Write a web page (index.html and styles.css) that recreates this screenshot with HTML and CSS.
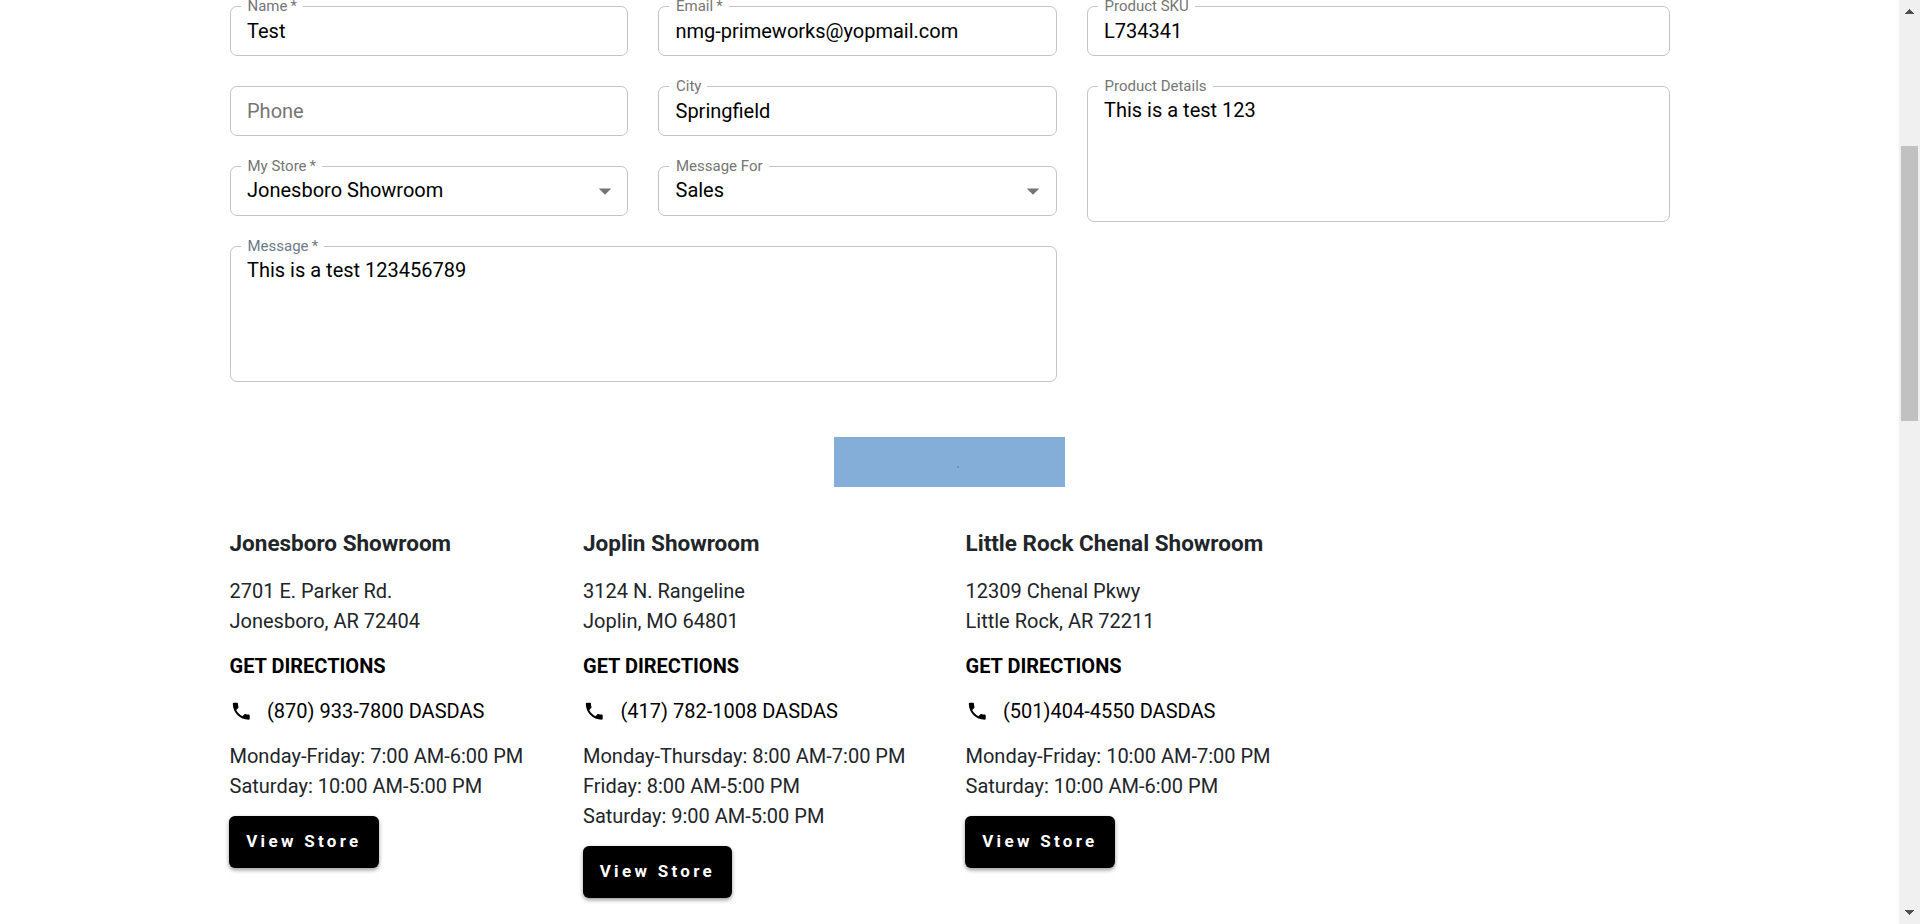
FILE: index.html
```html
<!DOCTYPE html>
<html lang="en">
<head>
<meta charset="utf-8">
<title>Contact a Showroom</title>
<link rel="stylesheet" href="styles.css">
</head>
<body>
<svg class="defs" width="0" height="0">
  <symbol id="phone" viewBox="0 0 24 24"><path d="M6.62 10.79c1.44 2.83 3.76 5.14 6.59 6.59l2.2-2.2c.27-.27.67-.36 1.02-.24 1.12.37 2.33.57 3.57.57.55 0 1 .45 1 1V20c0 .55-.45 1-1 1-9.39 0-17-7.61-17-17 0-.55.45-1 1-1h3.5c.55 0 1 .45 1 1 0 1.25.2 2.45.57 3.57.11.35.03.74-.25 1.02l-2.2 2.2z"/></symbol>
</svg>
<div class="page">
  <main class="content">
    <form class="form">
      <div class="field"><label class="label">Name&thinsp;*</label><span class="value">Test</span></div>
      <div class="field"><label class="label">Email&thinsp;*</label><span class="value">nmg-primeworks@yopmail.com</span></div>
      <div class="field"><label class="label">Product SKU</label><span class="value">L734341</span></div>
      <div class="field"><span class="value placeholder">Phone</span></div>
      <div class="field"><label class="label">City</label><span class="value">Springfield</span></div>
      <div class="field area details"><label class="label">Product Details</label><span class="value">This is a test 123</span></div>
      <div class="field select"><label class="label">My Store&thinsp;*</label><span class="value">Jonesboro Showroom</span><svg class="caret" viewBox="0 0 24 24"><path d="M7 10l5 5 5-5z"/></svg></div>
      <div class="field select"><label class="label">Message For</label><span class="value">Sales</span><svg class="caret" viewBox="0 0 24 24"><path d="M7 10l5 5 5-5z"/></svg></div>
      <div class="field area message"><label class="label">Message&thinsp;*</label><span class="value">This is a test 123456789</span></div>
    </form>
    <div class="submit"><span class="dot"></span></div>
    <section class="stores">
      <article class="store">
        <h2 class="name">Jonesboro Showroom</h2>
        <p class="text">2701 E. Parker Rd.<br>Jonesboro, AR 72404</p>
        <a class="directions">GET DIRECTIONS</a>
        <a class="phone"><svg class="phone-icon"><use href="#phone"/></svg><span>(870) 933-7800 DASDAS</span></a>
        <p class="text">Monday-Friday: 7:00 AM-6:00 PM<br>Saturday: 10:00 AM-5:00 PM</p>
        <a class="view">View Store</a>
      </article>
      <article class="store">
        <h2 class="name">Joplin Showroom</h2>
        <p class="text">3124 N. Rangeline<br>Joplin, MO 64801</p>
        <a class="directions">GET DIRECTIONS</a>
        <a class="phone"><svg class="phone-icon"><use href="#phone"/></svg><span>(417) 782-1008 DASDAS</span></a>
        <p class="text">Monday-Thursday: 8:00 AM-7:00 PM<br>Friday: 8:00 AM-5:00 PM<br>Saturday: 9:00 AM-5:00 PM</p>
        <a class="view">View Store</a>
      </article>
      <article class="store">
        <h2 class="name">Little Rock Chenal Showroom</h2>
        <p class="text">12309 Chenal Pkwy<br>Little Rock, AR 72211</p>
        <a class="directions">GET DIRECTIONS</a>
        <a class="phone"><svg class="phone-icon"><use href="#phone"/></svg><span>(501)404-4550 DASDAS</span></a>
        <p class="text">Monday-Friday: 10:00 AM-7:00 PM<br>Saturday: 10:00 AM-6:00 PM</p>
        <a class="view">View Store</a>
      </article>
    </section>
  </main>
  <aside class="scrollbar">
    <svg class="arrow" viewBox="0 0 9 5" shape-rendering="crispEdges"><path d="M4 0h1v1h1v1h1v1h1v1h1v1H0V4h1V3h1V2h1V1h1z"/></svg>
    <div class="thumb"></div>
    <svg class="arrow last" viewBox="0 0 9 5" shape-rendering="crispEdges"><path d="M0 0h9v1H8v1H7v1H6v1H5v1H4V4H3V3H2V2H1V1H0z"/></svg>
  </aside>
</div>
</body>
</html>
```
FILE: styles.css
```css
* { box-sizing: border-box; }
body { margin: 0; overflow: hidden; background: #fff; font-family: Roboto, "Liberation Sans", sans-serif; font-size: 20px; line-height: 30px; color: #212529; }
.defs { display: none; }
.page { display: flex; height: 924px; }
.content { flex: 1; padding: 6px 229.5px 0; }

/* Form */
.form { display: grid; grid-template-columns: 398.5px 398.5px 583px; grid-template-rows: 50px 50px 50px 136px; gap: 30px; }
.field { position: relative; display: flex; align-items: center; border: 1px solid #c4c4c4; border-radius: 7px; padding: 0 16.5px; color: #000; }
.label { position: absolute; top: -12px; left: 10px; padding: 0 6px 0 7px; background: #fff; font-size: 15px; line-height: 22px; color: #757575; white-space: nowrap; }
.value { white-space: nowrap; }
.placeholder { color: #757575; }
.area { align-items: flex-start; padding-top: 8px; }
.details { grid-column: 3; grid-row: 2 / span 2; height: 136px; }
.message { grid-column: 1 / span 2; grid-row: 4; }
.message .label { color: #6c7a89; }
.select { justify-content: space-between; padding-right: 7.5px; }
.select .value { padding-bottom: 2px; }
.caret { width: 30px; height: 30px; fill: #757575; }

/* Submit */
.submit { display: flex; width: 231px; height: 50px; margin: 55px auto 0; background: #84add8; }
.dot { width: 2px; height: 2px; margin: 29px 0 0 122.500px; background: #7092b6; }

/* Showrooms */
.stores { display: grid; grid-template-columns: 293.5px 322.5px auto; gap: 60px; margin-top: 39px; }
.store { display: flex; flex-direction: column; align-items: flex-start; white-space: nowrap; }
.name { margin: 0 0 15px; font-size: 22.5px; line-height: 35px; font-weight: 700; }
.text { margin: 0 0 15px; }
.directions { margin-bottom: 15px; font-weight: 700; color: #000; }
.phone { display: flex; align-items: center; gap: 15px; margin-bottom: 15px; color: #000; }
.phone-icon { width: 22.5px; height: 22.5px; margin-top: 1px; fill: #000; }
.view { width: 149.5px; height: 52px; margin-left: -0.3px; padding-left: 17px; border-radius: 6px; background: #000; color: #fff; font-size: 17px; font-weight: 700; line-height: 50px; letter-spacing: 3.3px; box-shadow: 0 2px 4px rgba(0, 0, 0, .4); }

/* Scrollbar */
.scrollbar { display: flex; flex-direction: column; align-items: center; width: 21px; padding: 9px 0 9px; background: #f0f0f0; }
.arrow { width: 9px; height: 5px; fill: #505050; }
.thumb { width: 17px; height: 275px; margin-top: 132px; background: #c1c1c1; }
.last { margin-top: auto; }
```
